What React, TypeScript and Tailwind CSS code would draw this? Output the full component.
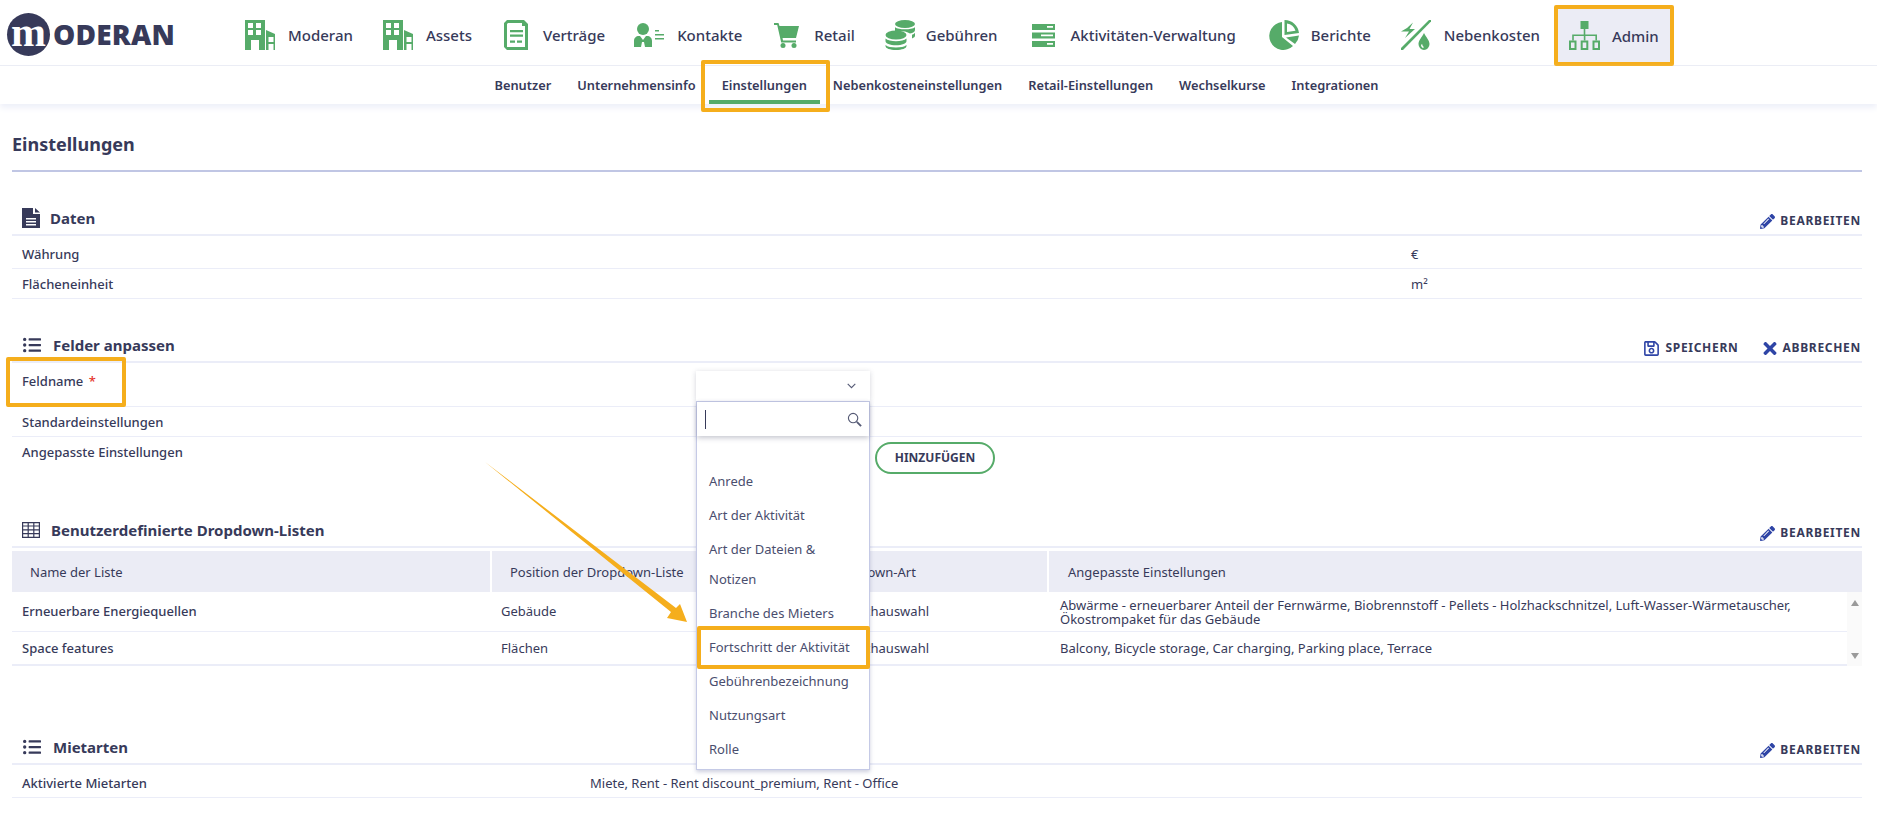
import React from "react";
import { FaListUl, FaPencilAlt, FaRegSave, FaTimes } from "react-icons/fa";

const G = "#56ab69";

const Building = () => (
  <svg width="30" height="30" viewBox="0 0 30 30" className="block">
    <path fill={G} fillRule="evenodd" d="M0 0h20v30H0zM3 3v5h5V3zM11 3v5h5V3zM3 10v5h5v-5zM11 10v5h5v-5zM6 20v10h8V20z" />
    <path fill={G} fillRule="evenodd" d="M21 10l9 4v16h-9zM23.5 17v5h5v-5zM23.5 24v6h5v-6z" />
    <path fill="#fff" d="M25 18h2v3h-2zM25 25h2v5h-2z" />
  </svg>
);
const Contract = () => (
  <svg width="25" height="30" viewBox="0 0 25 30" className="block">
    <path fill={G} fillRule="evenodd" d="M3 0h17l4 4v26H3l-3-3V3zM3 4v23h18V6h-3V3H4z" />
    <path fill={G} d="M6 10h13v2.2H6zM6 14.5h13v2.2H6zM6 20.5h5v2.2H6zM13 20.5h5v2.2h-5z" />
  </svg>
);
const Contact = () => (
  <svg width="30" height="24" viewBox="0 0 30 24" className="block">
    <circle cx="9" cy="6" r="6" fill={G} />
    <path fill={G} d="M0 24V18c0-3 2-5 5-5h1l3 4 3-4h1c3 0 5 2 5 5v6h-7l-1-5h-2l-1 5z" />
    <path fill={G} d="M21 7h4v1.6h-4zM21 11h9v1.6h-9zM21 15h9v1.6h-9z" />
  </svg>
);
const Cart = () => (
  <svg width="25" height="25" viewBox="0 0 25 25" className="block">
    <path fill={G} d="M0 0h4.5l1 3H25l-3 12H8.5l.5 2.5h13v2H7.2L3.2 2H0z" />
    <circle cx="9" cy="22.5" r="2.5" fill={G} />
    <circle cx="20" cy="22.5" r="2.5" fill={G} />
  </svg>
);
const Coins = () => (
  <svg width="30" height="30" viewBox="0 0 30 30" className="block">
    <ellipse cx="20" cy="4" rx="10" ry="4" fill={G} />
    <path fill={G} d="M10 7.2c2 1.5 5.5 2 10 2s8-.5 10-2V10c0 1.6-2 3-5 3.5-3-2-9-2.800-15-2.300zM27 14.800c1.400-.5 2.400-1.100 3-2v3c0 1-1 2-3 2.700z" />
    <ellipse cx="11" cy="15" rx="10.500" ry="4.500" fill={G} />
    <path fill={G} d="M.5 18.500c2 1.800 6 2.700 10.500 2.700s8.500-.9 10.500-2.700V21c0 2.500-4.500 4.300-10.500 4.300S.5 23.500.5 21zM.5 25c2 1.800 6 2.500 10.500 2.500s8.500-.7 10.500-2.500v1c0 2.400-4.500 4-10.500 4S.5 28.400.5 26z" />
  </svg>
);
const Bars = () => (
  <svg width="23" height="23" viewBox="0 0 23 23" className="block">
    <path fill={G} fillRule="evenodd" d="M0 0h23v6H0zM15 2v1.800h6V2zM0 8.500h23v6H0zM9 10.500v1.800h12v-1.800zM0 17h23v6H0zM15 19v1.800h6V19z" />
  </svg>
);
const Pie = () => (
  <svg width="30" height="30" viewBox="0 0 30 30" className="block">
    <path fill={G} d="M13 2v15l11 9a14 14 0 1 1-11-24z" />
    <path fill={G} fillRule="evenodd" d="M15.500 0A14.500 14.500 0 0 1 30 13l-14.500 2zM18 3.500V12l8.500-1.300A11 11 0 0 0 18 3.500z" />
    <path fill={G} d="M17 17.500l13-2a14 14 0 0 1-4 8.500z" />
  </svg>
);
const Utility = () => (
  <svg width="31" height="30" viewBox="0 0 31 30" className="block">
    <path fill={G} d="M7 8l6-5.500L9.500 9H15L5 18l4-6.500H1z" />
    <path fill={G} d="M29 0h2v1.500L3 30H1v-2z" />
    <path fill={G} fillRule="evenodd" d="M24 13c2 4 5.500 7.500 5.500 11a5.500 6 0 0 1-11 0c0-3.500 3.500-7 5.500-11zM21 24.500c0 2 1 3.500 2.500 3.500v-1.500c-.8 0-1-1-1-2z" />
  </svg>
);
const Org = () => (
  <svg width="31" height="29" viewBox="0 0 31 29" className="block">
    <path fill={G} d="M11.500 0h8v8h-8zM14.700 8h1.600v5.500H28v6h-1.600v-4.400h-10v4.400h-1.600v-4.400h-10v4.400H3.200v-6h11.500z" />
    <path fill="none" stroke={G} strokeWidth="2" d="M1 20.500h5.500V28H1zM12.700 20.500h5.600V28h-5.600zM24.500 20.500H30V28h-5.500z" />
  </svg>
);
const DocIcon = () => (
  <svg width="18" height="20" viewBox="0 0 18 20" className="block shrink-0">
    <path fill="#373a5a" fillRule="evenodd" d="M0 0h11v6h7v14H0zM4 10v1.500h10V10zM4 13v1.500h10V13zM4 16v1.500h10V16z" />
    <path fill="#373a5a" d="M13 0l5 4.500h-5z" />
  </svg>
);
const GridIcon = () => (
  <svg width="18" height="16" viewBox="0 0 18 16" className="block shrink-0">
    <path fill="none" stroke="#373a5a" strokeWidth="1.200" d="M.6.6h16.800v14.800H.6zM.6 4h16.800M.6 7.800h16.800M.6 11.600h16.800M6.200 .6v14.800M11.800 .6v14.800" />
  </svg>
);

const nav = [
  { l: "Moderan", i: <Building />, c: "gap-[13px]" },
  { l: "Assets", i: <Building />, c: "gap-[13px]" },
  { l: "Verträge", i: <Contract />, c: "gap-[14px] ml-[2px]" },
  { l: "Kontakte", i: <Contact />, c: "gap-[13px] -ml-[1px]" },
  { l: "Retail", i: <Cart />, c: "gap-[15px] ml-[2px]" },
  { l: "Gebühren", i: <Coins />, c: "gap-[11px]" },
  { l: "Aktivitäten-Verwaltung", i: <Bars />, c: "gap-[15px] ml-[5px]" },
  { l: "Berichte", i: <Pie />, c: "gap-[12px] ml-[3px]" },
  { l: "Nebenkosten", i: <Utility />, c: "gap-[13px] -ml-[1px]" },
];

const sub = ["Benutzer", "Unternehmensinfo", "Einstellungen", "Nebenkosteneinstellungen", "Retail-Einstellungen", "Wechselkurse", "Integrationen"];

const Action = ({ icon, label }: { icon: React.ReactNode; label: string }) => (
  <span className="flex items-center gap-[5px] text-[12px] leading-[16px] font-bold tracking-[0.7px] text-[#373a5a]">
    {icon}
    {label}
  </span>
);

const SectionHead = ({ icon, title, gap, right }: { icon: React.ReactNode; title: string; gap: string; right: React.ReactNode }) => (
  <div className="mt-[28px] h-[36px] border-b-2 border-[#ebedf8] flex items-end justify-between pb-[5px] pl-[10px] pr-[1px]">
    <div className={`flex items-center mb-[1px] ${gap} text-[15px] leading-[20px] font-bold text-[#373a5a]`}>
      {icon}
      {title}
    </div>
    {right}
  </div>
);

const Edit = <Action icon={<FaPencilAlt className="text-[#2f45a6] w-[15px] h-[15px]" />} label="BEARBEITEN" />;

export default function App() {
  return (
    <div className="relative w-full h-[828px] overflow-hidden bg-white text-[13px] leading-[20px] text-[#373a5a] font-['Noto_Sans',sans-serif]">
      <header className="h-[66px] border-b border-[#ebedf5] flex">
        <div className="w-[230px] flex items-start pl-[7px] pt-[13px]">
          <span className="w-[43px] h-[43px] rounded-full bg-[#373a5a] flex items-center justify-center text-white font-['Liberation_Serif',serif] font-bold text-[42px] leading-[38px] pb-[6px]">m</span>
          <span className="ml-[3px] mt-[2px] text-[28px] leading-[38px] font-extrabold tracking-[0.2px] text-[#373a5a] font-['Open_Sans',sans-serif]">ODERAN</span>
        </div>
        <nav className="flex">
          {nav.map((n) => (
            <a key={n.l} className={`flex items-center pt-[5px] px-[15px] text-[15px] font-medium ${n.c}`}>
              {n.i}
              <span>{n.l}</span>
            </a>
          ))}
          <a className="mt-[5px] -ml-[1px] h-[61px] px-[11px] border-4 border-[#f5ae1c] rounded-[2px] bg-[#ebecf5] flex items-center gap-[12px] text-[15px] font-medium">
            <Org />
            <span>Admin</span>
          </a>
        </nav>
      </header>

      <div className="relative h-[38px] flex justify-center pr-[4px] shadow-[0_4px_6px_#eef0f9]">
        {sub.map((s) => (
          <a key={s} className="relative h-[38px] flex items-center px-[13px] text-[12.800px] font-semibold">
            {s}
            {s === "Einstellungen" && (
              <>
                <span className="absolute left-0 right-0 bottom-0 h-[4px] bg-[#56ab69]" />
                <span className="absolute -left-[8px] -right-[10px] -top-[6px] -bottom-[8px] border-4 border-[#f5ae1c] rounded-[2px]" />
              </>
            )}
          </a>
        ))}
      </div>

      <main className="pl-[12px] pr-[15px]">
        <div className="border-b-2 border-[#c0c6e4] pt-[28px] pb-[14px] text-[18px] leading-[24px] font-bold">Einstellungen</div>

        <SectionHead icon={<DocIcon />} title="Daten" gap="gap-[10px]" right={Edit} />
        <div className="h-[33px] pt-[3px] pl-[10px] border-b border-[#ebedf8] flex items-center">
          <span className="w-[1389px] font-medium">Währung</span>
          <span>€</span>
        </div>
        <div className="h-[30px] pl-[10px] border-b border-[#ebedf8] flex items-center">
          <span className="w-[1389px] font-medium">Flächeneinheit</span>
          <span>m²</span>
        </div>

        <SectionHead
          icon={<FaListUl className="w-[20px] h-[18px] shrink-0" />}
          title="Felder anpassen"
          gap="gap-[11px]"
          right={
            <div className="flex gap-[25px]">
              <Action icon={<FaRegSave className="text-[#2f45a6] w-[17px] h-[17px] -my-[1px]" />} label="SPEICHERN" />
              <Action icon={<FaTimes className="text-[#2f45a6] w-[14px] h-[19px] -my-[2px]" />} label="ABBRECHEN" />
            </div>
          }
        />
        <div className="relative h-[44px] pl-[10px] border-b border-[#ebedf8] flex items-start">
          <span className="absolute -left-[6px] -top-[6px] w-[120px] h-[50px] border-4 border-[#f5ae1c] rounded-[2px]" />
          <span className="w-[674px] pt-[8px] font-medium">
            Feldname <span className="text-[#e5342b] ml-[2px]">*</span>
          </span>
          <div className="relative z-20 w-[174px] mt-[8px]">
            <div className="h-[30px] bg-white shadow-[0_1px_5px_rgba(55,58,90,0.22)] flex items-center justify-end pr-[14px]">
              <svg width="9" height="6" viewBox="0 0 9 6" fill="none" stroke="#555a75" strokeWidth="1.100"><path d="M.7.8l3.800 3.800L8.300.8" /></svg>
            </div>
            <div className="absolute left-0 top-[30px] w-[174px] h-[369px] bg-white border border-[#c5cae6] shadow-[0_2px_4px_rgba(90,95,150,0.3)]">
              <div className="h-[34px] flex items-center justify-between pl-[8px] pr-[7px] shadow-[0_2px_5px_rgba(55,58,90,0.28)]">
                <span className="w-[1px] h-[19px] bg-[#373a5a]" />
                <svg width="15" height="15" viewBox="0 0 16 16" fill="none" stroke="#555a75" strokeWidth="1.200">
                  <circle cx="6.500" cy="6.500" r="5" />
                  <path strokeWidth="2" d="M10.500 10.500l4.500 4.500" />
                </svg>
              </div>
              <div className="pt-[28px] text-[13px] leading-[30px] text-[#4a4e6e]">
                <div className="px-[12px] py-[2px]">Anrede</div>
                <div className="px-[12px] py-[2px]">Art der Aktivität</div>
                <div className="px-[12px] py-[2px]">Art der Dateien &amp; Notizen</div>
                <div className="px-[12px] py-[2px]">Branche des Mieters</div>
                <div className="relative px-[12px] py-[2px]">
                  Fortschritt der Aktivität
                  <span className="absolute left-0 -right-[1px] -top-[4px] -bottom-[5px] border-4 border-[#f5ae1c] rounded-[2px]" />
                </div>
                <div className="px-[12px] py-[2px]">Gebührenbezeichnung</div>
                <div className="px-[12px] py-[2px]">Nutzungsart</div>
                <div className="px-[12px] py-[2px]">Rolle</div>
              </div>
            </div>
          </div>
        </div>
        <div className="h-[30px] pl-[10px] border-b border-[#ebedf8] flex items-center font-medium">Standardeinstellungen</div>
        <div className="h-[47px] pl-[10px] flex items-start">
          <span className="w-[853px] pt-[5px] font-medium">Angepasste Einstellungen</span>
          <button className="mt-[5px] w-[120px] h-[32px] rounded-full border-2 border-[#56ab69] text-[12px] font-bold">HINZUFÜGEN</button>
        </div>

        <SectionHead icon={<GridIcon />} title="Benutzerdefinierte Dropdown-Listen" gap="gap-[11px]" right={Edit} />
        <div className="mt-[3px] h-[41px] grid grid-cols-[478px_317px_236px_1fr] gap-x-[2px]">
          <div className="bg-[#ebecf5] pl-[18px] flex items-center">Name der Liste</div>
          <div className="bg-[#ebecf5] pl-[18px] flex items-center">Position der Dropdown-Liste</div>
          <div className="bg-[#ebecf5] pl-[18px] flex items-center">Dropdown-Art</div>
          <div className="bg-[#ebecf5] pl-[19px] flex items-center">Angepasste Einstellungen</div>
        </div>
        <div className="flex">
          <div className="flex-1">
            <div className="h-[40px] grid grid-cols-[478px_317px_236px_1fr] gap-x-[2px] items-center border-b border-[#ebedf8]">
              <div className="pl-[10px] pb-[2px] font-medium">Erneuerbare Energiequellen</div>
              <div className="pl-[9px] pb-[2px]">Gebäude</div>
              <div className="pl-[9px] pb-[2px]">Mehrfachauswahl</div>
              <div className="pl-[11px] leading-[14px]">
                Abwärme - erneuerbarer Anteil der Fernwärme, Biobrennstoff - Pellets - Holzhackschnitzel, Luft-Wasser-Wärmetauscher,
                <br />
                Ökostrompaket für das Gebäude
              </div>
            </div>
            <div className="h-[34px] grid grid-cols-[478px_317px_236px_1fr] gap-x-[2px] items-center border-b-2 border-[#ebedf8]">
              <div className="pl-[10px] font-medium">Space features</div>
              <div className="pl-[9px]">Flächen</div>
              <div className="pl-[9px]">Mehrfachauswahl</div>
              <div className="pl-[11px]">Balcony, Bicycle storage, Car charging, Parking place, Terrace</div>
            </div>
          </div>
          <div className="w-[15px] h-[74px] bg-[#fafafa] flex flex-col items-center justify-between pt-[8px] pb-[7px]">
            <span className="w-0 h-0 border-x-[4.500px] border-x-transparent border-b-[6px] border-b-[#9a9a9a]" />
            <span className="w-0 h-0 border-x-[4.500px] border-x-transparent border-t-[6px] border-t-[#9a9a9a]" />
          </div>
        </div>

        <div className="h-[35px]" />
        <SectionHead icon={<FaListUl className="w-[20px] h-[18px] shrink-0" />} title="Mietarten" gap="gap-[11px]" right={Edit} />
        <div className="h-[33px] pt-[4px] pl-[10px] border-b border-[#ebedf8] flex items-center">
          <span className="w-[568px] font-medium">Aktivierte Mietarten</span>
          <span>Miete, Rent - Rent discount_premium, Rent - Office</span>
        </div>
      </main>

      <svg className="absolute left-0 top-0 z-10 pointer-events-none" width="700" height="640" viewBox="0 0 700 640">
        <polygon fill="#f5ae1c" points="485,462 676,608 680,604 687,622 667,618 671,612" />
      </svg>
    </div>
  );
}
